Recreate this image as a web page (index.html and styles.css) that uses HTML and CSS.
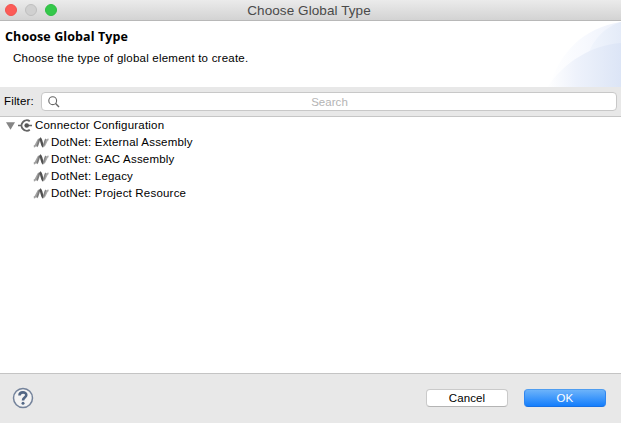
FILE: index.html
```html
<!DOCTYPE html>
<html lang="en">
<head>
<meta charset="utf-8">
<title>Choose Global Type</title>
<link rel="stylesheet" href="styles.css">
</head>
<body>
<svg class="defs" width="0" height="0" aria-hidden="true">
  <defs>
    <symbol id="dotnet" viewBox="0 0 16 12">
      <path d="M.8 9.500C4 9 3.600 2.800 6.800 2" fill="none" stroke="#a2a2a2" stroke-width="1.900"/>
      <path d="M3.600 9.500C5.500 8 5.300 3.500 6.900 2" fill="none" stroke="#7b7b7b" stroke-width="1.800"/>
      <path d="M6.800 1.500C9 2.200 8.300 8.500 10.500 9.700" fill="none" stroke="#505050" stroke-width="2.400"/>
      <path d="M10.300 9.300C13 8.500 12.300 3 15.500 2.200" fill="none" stroke="#aaa" stroke-width="1.900"/>
      <path d="M10.300 8.500C11.800 7 11.500 3.500 13 2" fill="none" stroke="#858585" stroke-width="1.600"/>
    </symbol>
  </defs>
</svg>
<div class="window">
  <header class="titlebar">
    <div class="lights"><i class="light close"></i><i class="light minimize"></i><i class="light zoom"></i></div>
    <span class="title">Choose Global Type</span>
  </header>
  <section class="banner">
    <div class="banner-text">
      <h1>Choose Global Type</h1>
      <p>Choose the type of global element to create.</p>
    </div>
    <svg class="swoosh" width="76" height="66" viewBox="0 0 76 66">
      <defs>
        <linearGradient id="g1"><stop offset="0" stop-color="#fff"/><stop offset=".5" stop-color="#f7f9fe"/><stop offset="1" stop-color="#edf1fb"/></linearGradient>
        <linearGradient id="g2"><stop offset="0" stop-color="#f2f6fd"/><stop offset="1" stop-color="#e4ebf8"/></linearGradient>
        <linearGradient id="g3"><stop offset="0" stop-color="#fff"/><stop offset=".4" stop-color="#eef2fb"/><stop offset="1" stop-color="#dce5f6"/></linearGradient>
      </defs>
      <path d="M4 66C15 31 38 7 76 1V66Z" fill="url(#g1)"/>
      <path d="M41 40C46 20 59 6 76 1V40Z" fill="url(#g2)"/>
      <path d="M2 66C20 41 46 24 76 22V66Z" fill="url(#g3)"/>
    </svg>
  </section>
  <div class="filter">
    <label>Filter:</label>
    <div class="search">
      <svg class="glass" width="12" height="12" viewBox="0 0 12 12" fill="none" stroke="#666"><circle cx="4.700" cy="4.700" r="3.900" stroke-width="1.100"/><path d="M7.600 7.600L11 11" stroke-width="1.400"/></svg>
      <span>Search</span>
    </div>
  </div>
  <main class="tree">
    <div class="row root">
      <svg class="arrow" width="9" height="8" viewBox="0 0 9 8"><path d="M0 .3H9L4.500 7.700Z" fill="#858585"/></svg>
      <svg class="connector" width="15" height="13" viewBox="0 0 15 13" fill="none" stroke="#666"><path d="M11.800 2.300A5.200 5.200 0 1 0 11.800 10.700" stroke-width="1.900"/><path d="M0 6.500H3.500M9 6.500H14" stroke-width="1.700"/><circle cx="8.700" cy="6.500" r="2.300" fill="#555" stroke="none"/></svg>
      <span>Connector Configuration</span>
    </div>
    <div class="row leaf"><svg class="dotnet"><use href="#dotnet"/></svg><span>DotNet: External Assembly</span></div>
    <div class="row leaf"><svg class="dotnet"><use href="#dotnet"/></svg><span>DotNet: GAC Assembly</span></div>
    <div class="row leaf"><svg class="dotnet"><use href="#dotnet"/></svg><span>DotNet: Legacy</span></div>
    <div class="row leaf"><svg class="dotnet"><use href="#dotnet"/></svg><span>DotNet: Project Resource</span></div>
  </main>
  <footer class="footer">
    <svg class="help" width="22" height="22" viewBox="0 0 22 22" fill="none"><circle cx="11" cy="11" r="9.500" fill="#f3f3f3" stroke="#74839b" stroke-width="1.500"/><path d="M7.500 8.500C7.500 4.300 14.300 4.400 14.300 8.100C14.300 10.700 11 10.500 11 13.400" stroke="#526785" stroke-width="2.600"/><circle cx="11" cy="16.200" r="1.500" fill="#526785"/></svg>
    <div class="buttons"><button class="cancel">Cancel</button><button class="ok">OK</button></div>
  </footer>
</div>
</body>
</html>
```
FILE: styles.css
```css
* { box-sizing: border-box; }
body { margin: 0; background: #e8e8e8; font: 11.5px/17px "Liberation Sans", Arial, sans-serif; letter-spacing: .2px; color: #000; }
.defs { position: absolute; }
.window { width: 621px; height: 423px; display: flex; flex-direction: column; background: #e8e8e8; overflow: hidden; }
.titlebar { height: 21px; flex: none; display: grid; grid-template-columns: 64px 1fr 67px; align-items: center; background: linear-gradient(#ebebeb, #d3d3d3); border-bottom: 1px solid #b8b8b8; }
.lights { display: flex; gap: 8px; padding-left: 5px; }
.light { width: 12px; height: 12px; border-radius: 50%; border: 1px solid; }
.close { background: #fc5b57; border-color: #f0534f; }
.minimize { background: #d0d0d0; border-color: #bfbfbf; }
.zoom { background: #34c84a; border-color: #2dbd42; }
.title { text-align: center; font-size: 13.5px; letter-spacing: .08px; color: #4a4a4a; }
.banner { height: 66px; flex: none; display: flex; justify-content: space-between; background: #fff; }
.banner-text { padding: 7px 0 0 5px; }
h1 { margin: 0; font: bold 12.5px/17px "Open Sans", "Noto Sans", sans-serif; letter-spacing: .1px; }
p { margin: 5px 0 0 8px; letter-spacing: .22px; }
.filter { height: 30px; flex: none; display: flex; padding: 5px 4px 5px 4px; border-bottom: 1px solid #c6c6c6; }
.filter label { width: 37px; line-height: 19px; letter-spacing: .15px; }
.search { flex: 1; height: 19px; display: grid; grid-template-columns: 30px 1fr 30px; align-items: center; background: #fff; border: 1px solid #c8c8c8; border-radius: 4px; }
.search span { text-align: center; color: #b4b4b4; padding: 1px 0 0 1px; letter-spacing: .05px; }
.glass { margin-left: 6px; }
.tree { height: 256px; flex: none; background: #fff; }
.row { height: 17px; display: flex; align-items: center; white-space: nowrap; }
.root { padding-left: 6px; }
.connector { margin: 0 2px 0 3px; }
.leaf { padding-left: 33px; }
.dotnet { width: 16px; height: 12px; margin-right: 2px; }
.footer { flex: 1; display: flex; justify-content: space-between; align-items: flex-start; border-top: 1px solid #c4c4c4; padding: 13px 15px 0 12px; }
.buttons { display: flex; gap: 16px; padding-top: 2px; }
button { width: 82px; height: 18px; padding: 0; border: 1px solid #cacaca; border-bottom-color: #b4b4b4; border-radius: 4px; background: #fff; font: 11.5px/16px "Liberation Sans", Arial, sans-serif; letter-spacing: .1px; color: #000; }
.ok { color: #fff; border-color: #4f9df0 #2f86f0 #1670e4; background: linear-gradient(#6cb3fa, #147efc); }
```
